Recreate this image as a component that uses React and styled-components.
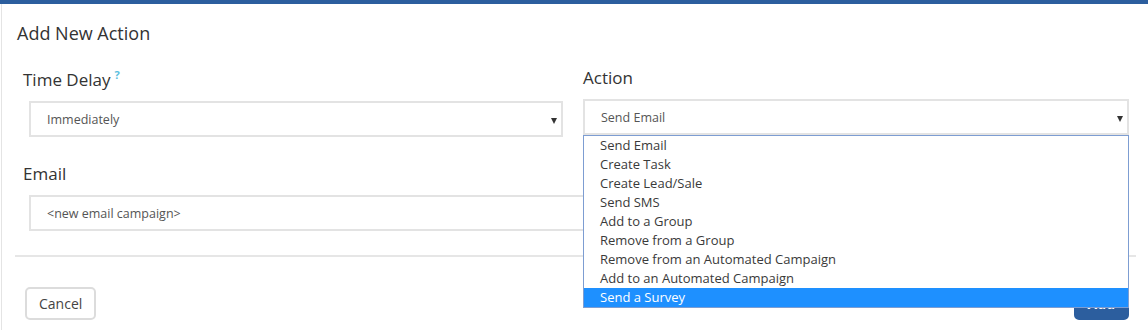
import React, { useState } from "react";
import styled, { createGlobalStyle } from "styled-components";

const GlobalStyle = createGlobalStyle`
	html, body {
		margin: 0;
		padding: 0;
		background: #ffffff;
	}
	body {
		font-family: "Open Sans", "Liberation Sans", Arial, sans-serif;
		color: #333;
	}
`;

const Modal = styled.div`
	height: 330px;
	box-sizing: border-box;
	border-top: 4px solid #2c5e9e;
	overflow: hidden;
	display: flex;
	flex-direction: column;
`;

const Inner = styled.div`
	flex: 1;
	margin-left: 1px;
	border-left: 1px solid #e4e4e4;
`;

const Title = styled.h4`
	margin: 0;
	padding: 17px 0 0 15px;
	font-size: 18px;
	line-height: 24px;
	font-weight: 400;
	color: #333;
`;

const FormBody = styled.div`
	display: grid;
	grid-template-columns: 540px 1fr;
	column-gap: 20px;
	align-items: start;
	padding: 0 19px 0 21px;
`;

const Field = styled.div`
	position: relative;
	grid-column: ${(p) => (p.$wide ? "1 / -1" : "auto")};
	margin-top: ${(p) => p.$top}px;
`;

const Label = styled.label`
	display: block;
	font-size: 17px;
	line-height: 24px;
	font-weight: 400;
	color: #333;
	margin-bottom: 9px;
`;

const Hint = styled.sup`
	color: #5bc0de;
	font-size: 11px;
	font-weight: 700;
	margin-left: 4px;
	vertical-align: 7px;
	line-height: 0;
`;

const SelectBox = styled.div`
	position: relative;
	box-sizing: border-box;
	height: 36px;
	margin-left: ${(p) => (p.$indent ? "6px" : "0")};
	border: 2px solid #e3e3e3;
	padding: 1px 30px 0 16px;
	font-size: 12.5px;
	line-height: 32px;
	color: #555;
	white-space: nowrap;

	&::after {
		content: "";
		position: absolute;
		right: 4px;
		top: 15px;
		border-left: 3.5px solid transparent;
		border-right: 3.5px solid transparent;
		border-top: 6px solid #333;
	}
`;

const OptionList = styled.ul`
	position: absolute;
	top: 100%;
	left: 0;
	right: 0;
	margin: 0;
	padding: 0;
	list-style: none;
	background: #fff;
	border: 1px solid #7d9dd2;
	z-index: 10;
`;

const Option = styled.li`
	height: 19px;
	line-height: 19px;
	padding-left: 16px;
	font-size: 13px;
	color: ${(p) => (p.$active ? "#fff" : "#3a3a3a")};
	background: ${(p) => (p.$active ? "#1e90ff" : "transparent")};
`;

const Divider = styled.hr`
	margin: 24px 12px 0 13px;
	border: none;
	height: 2px;
	background: #e6e6e6;
`;

const Footer = styled.div`
	display: flex;
	justify-content: space-between;
	align-items: flex-end;
	margin-top: 30px;
	padding: 0 19px 0 23px;
`;

const Button = styled.button`
	box-sizing: border-box;
	height: 33px;
	padding: 0 12px;
	border-radius: 5px;
	font-family: "Open Sans", "Liberation Sans", Arial, sans-serif;
	font-size: 14px;
	cursor: pointer;
	border: 2px solid ${(p) => (p.$primary ? "#2c5e9e" : "#dcdcdc")};
	background: ${(p) => (p.$primary ? "#2c5e9e" : "#fff")};
	color: ${(p) => (p.$primary ? "#fff" : "#444")};
	font-weight: ${(p) => (p.$primary ? 700 : 400)};
`;

const actions = [
	"Send Email",
	"Create Task",
	"Create Lead/Sale",
	"Send SMS",
	"Add to a Group",
	"Remove from a Group",
	"Remove from an Automated Campaign",
	"Add to an Automated Campaign",
	"Send a Survey",
];

const App = () => {
	const [hovered, setHovered] = useState("Send a Survey");

	return (
		<>
			<GlobalStyle />
			<Modal>
				<Inner>
					<Title>Add New Action</Title>
					<FormBody>
						<Field $top={23}>
							<Label>
								Time Delay<Hint>?</Hint>
							</Label>
							<SelectBox $indent>Immediately</SelectBox>
						</Field>
						<Field $top={21}>
							<Label>Action</Label>
							<SelectBox>Send Email</SelectBox>
							<OptionList>
								{actions.map((a) => (
									<Option
										key={a}
										$active={a === hovered}
										onMouseEnter={() => setHovered(a)}
									>
										{a}
									</Option>
								))}
							</OptionList>
						</Field>
						<Field $wide $top={25}>
							<Label>Email</Label>
							<SelectBox $indent>&lt;new email campaign&gt;</SelectBox>
						</Field>
					</FormBody>
					<Divider />
					<Footer>
						<Button>Cancel</Button>
						<Button $primary>Add</Button>
					</Footer>
				</Inner>
			</Modal>
		</>
	);
};

export default App;
